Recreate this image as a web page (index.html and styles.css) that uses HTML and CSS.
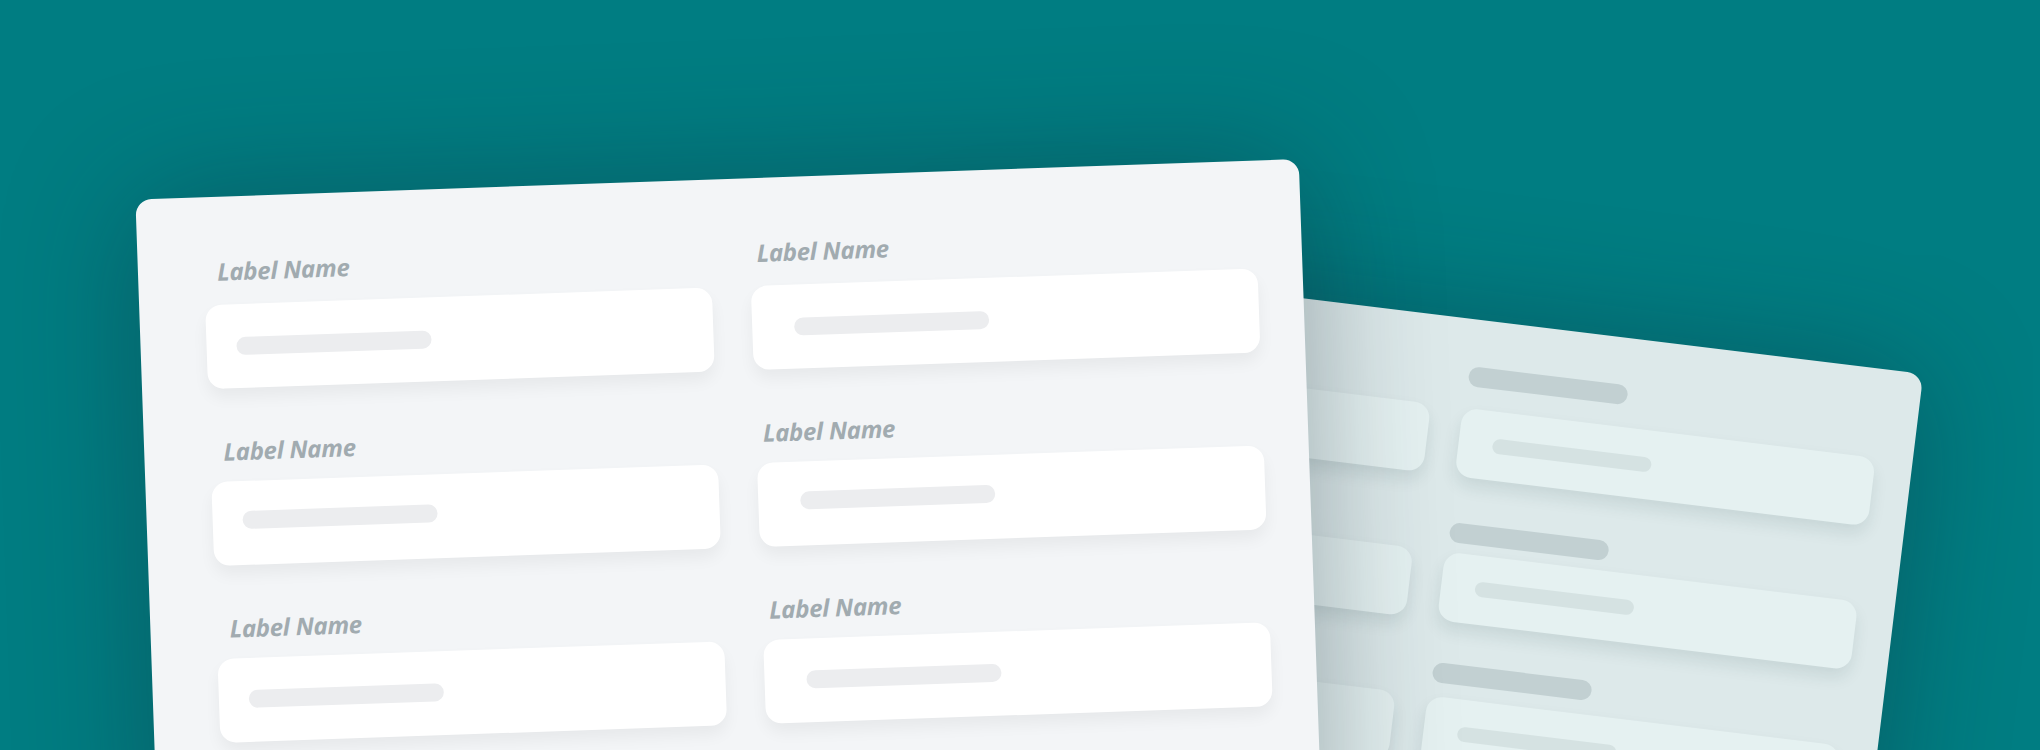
FILE: index.html
```html
<!DOCTYPE html>
<html lang="en">
<head>
<meta charset="utf-8">
<title>Form layout</title>
<link rel="stylesheet" href="styles.css">
</head>
<body>
<main class="stage">
  <section class="sheet sheet-back" aria-hidden="true">
    <div class="field"><span class="tag"></span><div class="box"><span class="bar"></span></div></div>
    <div class="field"><span class="tag"></span><div class="box"><span class="bar"></span></div></div>
    <div class="field near"><span class="tag"></span><div class="box high"><span class="bar"></span></div></div>
    <div class="field near"><span class="tag"></span><div class="box high"><span class="bar"></span></div></div>
    <div class="field mid"><span class="tag"></span><div class="box"><span class="bar"></span></div></div>
    <div class="field mid"><span class="tag"></span><div class="box"><span class="bar"></span></div></div>
  </section>
  <section class="sheet sheet-front">
    <div class="field far"><span class="label">Label Name</span><div class="box"><span class="bar"></span></div></div>
    <div class="field far right"><span class="label">Label Name</span><div class="box"><span class="bar"></span></div></div>
    <div class="field"><span class="label">Label Name</span><div class="box high"><span class="bar"></span></div></div>
    <div class="field right"><span class="label">Label Name</span><div class="box high"><span class="bar"></span></div></div>
    <div class="field"><span class="label">Label Name</span><div class="box"><span class="bar"></span></div></div>
    <div class="field right"><span class="label">Label Name</span><div class="box"><span class="bar"></span></div></div>
  </section>
</main>
</body>
</html>
```

FILE: styles.css
```css
* {
  box-sizing: border-box;
}

body {
  margin: 0;
  font-family: "Noto Sans", "Open Sans", sans-serif;
}

.stage {
  position: relative;
  height: 750px;
  overflow: hidden;
  background: #007d82;
}

/* Two overlapping sheets of paper placed freely on the stage */
.sheet {
  position: absolute;
  display: grid;
  align-content: start;
  border-radius: 16px;
}

.sheet-front {
  left: 135px;
  top: 199px;
  width: 1163.5px;
  height: 900px;
  padding: 63px 44.7px 0 66.3px;
  grid-template-columns: 1fr 1fr;
  gap: 47.8px 39px;
  background: #f3f5f7;
  box-shadow: 0 4px 130px rgba(20, 40, 50, 0.38);
  transform: translate(0.4px, 0.6px) rotate(-2deg);
  transform-origin: 0 0;
}

.sheet-back {
  left: 966.5px;
  top: 374.3px;
  width: 956px;
  height: 800px;
  padding: 38.6px 36.6px 0 54.3px;
  grid-template-columns: 416.2px 416.2px;
  justify-content: end;
  gap: 26.2px 32.7px;
  background: #dde9ea;
  box-shadow: 0 4px 120px rgba(20, 40, 50, 0.36);
  transform: translateX(0.3px) rotate(6.95deg);
  transform-origin: 100% 0;
}

.field {
  display: flex;
  flex-direction: column;
  justify-content: flex-end;
  height: 129px;
}

.label {
  margin: 0 0 14px 13px;
  color: #a1abb0;
  font-size: 24px;
  font-style: italic;
  font-weight: 700;
  letter-spacing: -0.3px;
  line-height: 32px;
  white-space: nowrap;
}

.right .label {
  margin-left: 7px;
}

.far .label {
  margin-bottom: 17px;
}

.box {
  display: flex;
  align-items: center;
  flex: none;
  height: 84px;
  padding: 0 30px 1px;
  border-radius: 16px;
  background: #fff;
  box-shadow: 0 9px 16px rgba(0, 0, 0, 0.05);
}

.right .box {
  padding-left: 42px;
}

.box.high {
  padding-bottom: 6px;
}

.bar {
  width: 195px;
  height: 18px;
  border-radius: 9px;
  background: #ecedef;
}

.sheet-back .field {
  height: 119px;
}

.tag {
  width: 160px;
  height: 20px;
  margin: 0 0 21.6px 2.2px;
  border-radius: 10px;
  background: #c2d0d2;
}

.near .tag {
  margin-bottom: 9.3px;
}

.mid .tag {
  margin-bottom: 14.2px;
}

.sheet-back .box {
  height: 69px;
  padding: 1px 34px 0;
  background: #e5f1f1;
  box-shadow: 0 9px 16px rgba(20, 60, 60, 0.1);
}

.sheet-back .box.high {
  padding: 0 34px 2px;
}

.sheet-back .bar {
  width: 160px;
  height: 15px;
  background: #d5e2e2;
}
```
